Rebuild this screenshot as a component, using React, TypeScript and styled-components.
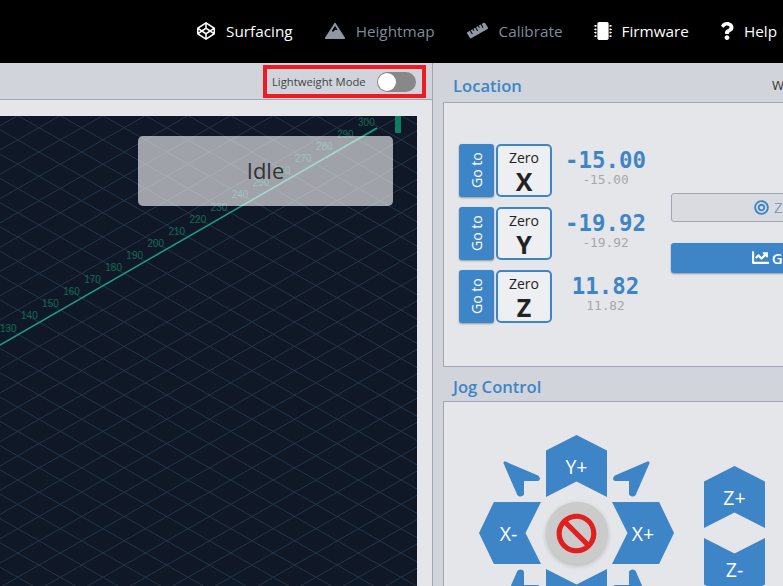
import React from "react";
import styled, { createGlobalStyle } from "styled-components";
import { FaBan, FaBullseye, FaChartLine, FaCodepen, FaMicrochip, FaMountain, FaQuestion, FaRuler } from "react-icons/fa";

const Global = createGlobalStyle`
  html, body { margin: 0; padding: 0; width: 783px; height: 586px; overflow: hidden; background: #d1d4db; }
  * { box-sizing: border-box; }
  body { font-family: "Open Sans", "Liberation Sans", sans-serif; }
`;

const Page = styled.div`
  width: 783px;
  height: 586px;
  overflow: hidden;
  display: flex;
  flex-direction: column;
`;
const Header = styled.header`
  height: 63px;
  flex: none;
  background: #000;
  display: flex;
  justify-content: flex-end;
  align-items: center;
  padding: 0 6px 2px 0;
  gap: 32px;
`;
const NavItem = styled.a<{ $dim?: boolean }>`
  display: flex;
  align-items: center;
  gap: 11px;
  font-size: 15.3px;
  font-weight: 500;
  white-space: nowrap;
  color: ${(p) => (p.$dim ? "#7f8b99" : "#fff")};
`;
const NavIcon = styled.span<{ $w: number; $dim?: boolean }>`
  width: ${(p) => p.$w}px;
  display: flex;
  justify-content: center;
  color: ${(p) => (p.$dim ? "#8d98a5" : "#fff")};
  svg { flex: none; font-size: ${(p) => Math.max(p.$w, 18)}px; }
`;
const Main = styled.div`
  flex: 1;
  display: flex;
  min-height: 0;
`;
const LeftColumn = styled.section`
  width: 433px;
  flex: none;
  display: flex;
  flex-direction: column;
  border-right: 1px solid #a0a6b2;
`;
const Toolbar = styled.div`
  height: 37px;
  flex: none;
  display: flex;
  justify-content: flex-end;
  padding: 2px 6px 0 0;
  border-bottom: 1px solid #a0a6b2;
`;
const Highlight = styled.div`
  width: 163px;
  height: 33px;
  border: 4px solid #ed1c24;
  display: flex;
  align-items: center;
  gap: 11px;
  padding-left: 5px;
  font-size: 11.25px;
  white-space: nowrap;
  color: #444;
`;
const Switch = styled.span`
  width: 39px;
  height: 20px;
  flex: none;
  border-radius: 10px;
  background: #888;
  position: relative;
  &::after {
    content: "";
    position: absolute;
    left: 1px;
    top: 1px;
    width: 18px;
    height: 18px;
    border-radius: 50%;
    background: #fff;
  }
`;
const CanvasWell = styled.div`
  flex: 1;
  min-height: 0;
  background: #e5e6ea;
  padding: 16px 15px 0 0;
`;
const Canvas = styled.div`
  position: relative;
  width: 100%;
  height: 100%;
  background: #101828;
  overflow: hidden;
  svg { display: block; }
`;
const StatusBadge = styled.div`
  position: absolute;
  left: 138px;
  top: 20px;
  width: 255px;
  height: 70px;
  padding-bottom: 2px;
  border-radius: 5px;
  background: rgba(255, 255, 255, 0.6);
  display: flex;
  align-items: center;
  justify-content: center;
  font-size: 22px;
  color: #333;
`;
const RightColumn = styled.section`
  flex: 1;
  min-width: 0;
  padding-left: 10px;
  display: flex;
  flex-direction: column;
`;
const TitleRow = styled.div`
  height: 39px;
  flex: none;
  display: flex;
  justify-content: space-between;
  align-items: flex-start;
  padding: 12px 0 0 10px;
`;
const Title = styled.h2`
  margin: 0;
  font-size: 16.6px;
  line-height: 22px;
  font-weight: 600;
  color: #3e85c7;
`;
const WorkLabel = styled.span`
  font-size: 13px;
  line-height: 21px;
  color: #333;
  width: 11px;
  overflow: hidden;
  white-space: nowrap;
`;
const Box = styled.div`
  width: 500px;
  background: #e5e6ea;
  border: 1px solid #a0a6b2;
`;
const LocationBox = styled(Box)`
  height: 265px;
  flex: none;
  display: flex;
  align-items: center;
  padding: 0 0 2px 15px;
`;
const AxisList = styled.div`
  display: flex;
  flex-direction: column;
  gap: 10px;
`;
const AxisRow = styled.div`
  display: flex;
  gap: 2px;
  align-items: stretch;
`;
const GoTo = styled.button`
  width: 35px;
  height: 53px;
  padding: 0;
  border: 0;
  border-radius: 3px;
  background: #3e85c7;
  color: #fff;
  font: 400 14px "Open Sans", sans-serif;
  box-shadow: 0 1px 2px rgba(0, 0, 0, 0.35);
  span { display: block; transform: rotate(-90deg); white-space: nowrap; }
`;
const ZeroButton = styled.button`
  width: 56px;
  height: 53px;
  padding: 0;
  border: 2px solid #3e85c7;
  border-radius: 5px;
  background: #eeeff2;
  color: #222;
  display: flex;
  flex-direction: column;
  align-items: center;
  font-family: "Open Sans", sans-serif;
  small { font-size: 14px; line-height: 18px; margin-top: 3px; }
  b { font-size: 25px; line-height: 24px; font-weight: 700; margin-top: 2px; }
`;
const Values = styled.div`
  width: 103px;
  display: flex;
  flex-direction: column;
  align-items: center;
  font-family: "DejaVu Sans Mono", "Liberation Mono", monospace;
`;
const MainValue = styled.div`
  font-size: 22.4px;
  line-height: 25px;
  font-weight: 700;
  color: #3e85c7;
  margin-top: 4px;
`;
const SubValue = styled.div`
  font-size: 12.8px;
  line-height: 14px;
  color: #a5a7ab;
`;
const ActionList = styled.div`
  margin: 0 0 2px 14px;
  display: flex;
  flex-direction: column;
  gap: 21px;
  width: 247px;
  flex: none;
`;
const Action = styled.button<{ $primary?: boolean }>`
  height: 29.5px;
  padding: 0 0 0 ${(p) => (p.$primary ? 2 : 8)}px;
  border-radius: 3px;
  border: ${(p) => (p.$primary ? "0" : "1px solid #a0a6b2")};
  background: ${(p) => (p.$primary ? "#3e85c7" : "#d9dbe0")};
  color: ${(p) => (p.$primary ? "#fff" : "#7f9cba")};
  font: ${(p) => (p.$primary ? 600 : 400)} 15px "Open Sans", sans-serif;
  display: flex;
  align-items: center;
  justify-content: center;
  gap: ${(p) => (p.$primary ? 3 : 5)}px;
  box-shadow: ${(p) => (p.$primary ? "0 1px 2px rgba(0,0,0,.35)" : "none")};
  white-space: nowrap;
  svg { color: ${(p) => (p.$primary ? "#fff" : "#3e85c7")}; font-size: ${(p) => (p.$primary ? 17 : 15)}px; }
`;
const JogTitleRow = styled.div`
  height: 34px;
  flex: none;
  padding: 9px 0 0 10px;
`;
const JogBox = styled(Box)`
  flex: 1;
  min-height: 300px;
  display: flex;
  align-items: flex-start;
  padding: 33px 0 0 35px;
  gap: 30px;
`;
const JogGrid = styled.div`
  display: grid;
  grid-template-columns: 62px 61px 62px;
  grid-template-rows: 62px 62px 62px;
  gap: 5px;
`;
const ZColumn = styled.div`
  display: flex;
  flex-direction: column;
  gap: 10px;
  width: 61px;
  margin-top: 31px;
`;
const JogButton = styled.button<{ $shape: string }>`
  width: 100%;
  height: 62px;
  padding: 0 ${(p) => (p.$shape === "left" ? "3px" : "0")} 0 0;
  border: 0;
  background: #3e85c7;
  color: #fff;
  font: 400 19.5px "Open Sans", sans-serif;
  display: flex;
  align-items: center;
  justify-content: center;
  clip-path: ${(p) =>
    ({
      up: "polygon(0 25%, 50% 0, 100% 25%, 100% 100%, 50% 75%, 0 100%)",
      down: "polygon(0 0, 50% 25%, 100% 0, 100% 75%, 50% 100%, 0 75%)",
      left: "polygon(24% 0, 100% 0, 75% 50%, 100% 100%, 24% 100%, 0 50%)",
      right: "polygon(0 0, 76% 0, 100% 50%, 76% 100%, 0 100%, 25% 50%)",
    } as Record<string, string>)[p.$shape]};
`;
const DiagonalCell = styled.svg`
  display: block;
  width: 62px;
  height: 62px;
`;
const StopCell = styled.div`
  display: flex;
  align-items: center;
  justify-content: center;
`;
const StopButton = styled.button`
  width: 62px;
  height: 62px;
  flex: none;
  padding: 0;
  border: 0;
  border-radius: 50%;
  background: #cbcbcb;
  box-shadow: 0 2px 5px rgba(0, 0, 0, 0.2);
  display: flex;
  align-items: center;
  justify-content: center;
  color: #e0201f;
  font-size: 41px;
`;

const axes = [
  { axis: "X", value: "-15.00" },
  { axis: "Y", value: "-19.92" },
  { axis: "Z", value: "11.82" },
];

function Diagonal({ flipX, flipY }: { flipX?: boolean; flipY?: boolean }) {
  const transform = `translate(${flipX ? 62 : 0} ${flipY ? 62 : 0}) scale(${flipX ? -1 : 1} ${flipY ? -1 : 1})`;
  return (
    <DiagonalCell viewBox="0 0 62 62">
      <path
        transform={transform}
        d="M26 28 L58.5 42 Q60.5 44 58.5 44.5 L43.5 44.5 L43.5 59 Q41 61 39.5 59 Z"
        fill="#3e85c7"
        stroke="#3e85c7"
        strokeWidth="3"
        strokeLinejoin="round"
      />
    </DiagonalCell>
  );
}

const labels = Array.from({ length: 18 }, (_, i) => 130 + i * 10);

/* Both families of lines pass through the crossing at (-3.6, 11.7); they step by one diamond. */
const PERIOD_X = 42.6;
const PERIOD_Y = 24.3;
const SLOPE = PERIOD_Y / PERIOD_X;
const gridPath = Array.from({ length: 60 }, (_, k) => {
  const offset = (k - 25) * PERIOD_Y;
  const fall = 11.7 + offset + 3.6 * SLOPE;
  const rise = 11.7 + offset - 3.6 * SLOPE;
  return `M0 ${fall.toFixed(2)} L417 ${(fall + 417 * SLOPE).toFixed(2)} M0 ${rise.toFixed(2)} L417 ${(rise - 417 * SLOPE).toFixed(2)}`;
}).join(" ");

function Scene() {
  return (
    <svg width="417" height="470" viewBox="0 0 417 470">
      <path d={gridPath} stroke="#23354a" strokeWidth="1" fill="none" />
      <line x1="0" y1="229" x2="377" y2="12" stroke="#1a9e80" strokeWidth="1.5" />
      {labels.map((n, i) => (
        <text
          key={n}
          x={i * 21.06}
          y={215.5 - i * 12.1}
          fill="#126852"
          fontSize="10"
          fontFamily="Liberation Sans, sans-serif"
        >
          {n}
        </text>
      ))}
      <rect x="395" y="0" width="6" height="17" fill="#0e7c5f" />
    </svg>
  );
}

export default function App() {
  return (
    <Page>
      <Global />
      <Header>
        <NavItem><NavIcon $w={18}><FaCodepen /></NavIcon>Surfacing</NavItem>
        <NavItem $dim><NavIcon $w={20} $dim><FaMountain /></NavIcon>Heightmap</NavItem>
        <NavItem $dim><NavIcon $w={21} $dim><FaRuler /></NavIcon>Calibrate</NavItem>
        <NavItem><NavIcon $w={16}><FaMicrochip /></NavIcon>Firmware</NavItem>
        <NavItem><NavIcon $w={12}><FaQuestion /></NavIcon>Help</NavItem>
      </Header>
      <Main>
        <LeftColumn>
          <Toolbar>
            <Highlight>
              Lightweight Mode
              <Switch />
            </Highlight>
          </Toolbar>
          <CanvasWell>
            <Canvas>
              <Scene />
              <StatusBadge>Idle</StatusBadge>
            </Canvas>
          </CanvasWell>
        </LeftColumn>
        <RightColumn>
          <TitleRow>
            <Title>Location</Title>
            <WorkLabel>Work</WorkLabel>
          </TitleRow>
          <LocationBox>
            <AxisList>
              {axes.map(({ axis, value }) => (
                <AxisRow key={axis}>
                  <GoTo><span>Go to</span></GoTo>
                  <ZeroButton><small>Zero</small><b>{axis}</b></ZeroButton>
                  <Values>
                    <MainValue>{value}</MainValue>
                    <SubValue>{value}</SubValue>
                  </Values>
                </AxisRow>
              ))}
            </AxisList>
            <ActionList>
              <Action><FaBullseye />Zero Axes</Action>
              <Action $primary><FaChartLine />Generate</Action>
            </ActionList>
          </LocationBox>
          <JogTitleRow><Title>Jog Control</Title></JogTitleRow>
          <JogBox>
            <JogGrid>
              <Diagonal />
              <JogButton $shape="up">Y+</JogButton>
              <Diagonal flipX />
              <JogButton $shape="left">X-</JogButton>
              <StopCell><StopButton><FaBan /></StopButton></StopCell>
              <JogButton $shape="right">X+</JogButton>
              <Diagonal flipY />
              <JogButton $shape="down">Y-</JogButton>
              <Diagonal flipX flipY />
            </JogGrid>
            <ZColumn>
              <JogButton $shape="up">Z+</JogButton>
              <JogButton $shape="down">Z-</JogButton>
            </ZColumn>
          </JogBox>
        </RightColumn>
      </Main>
    </Page>
  );
}
